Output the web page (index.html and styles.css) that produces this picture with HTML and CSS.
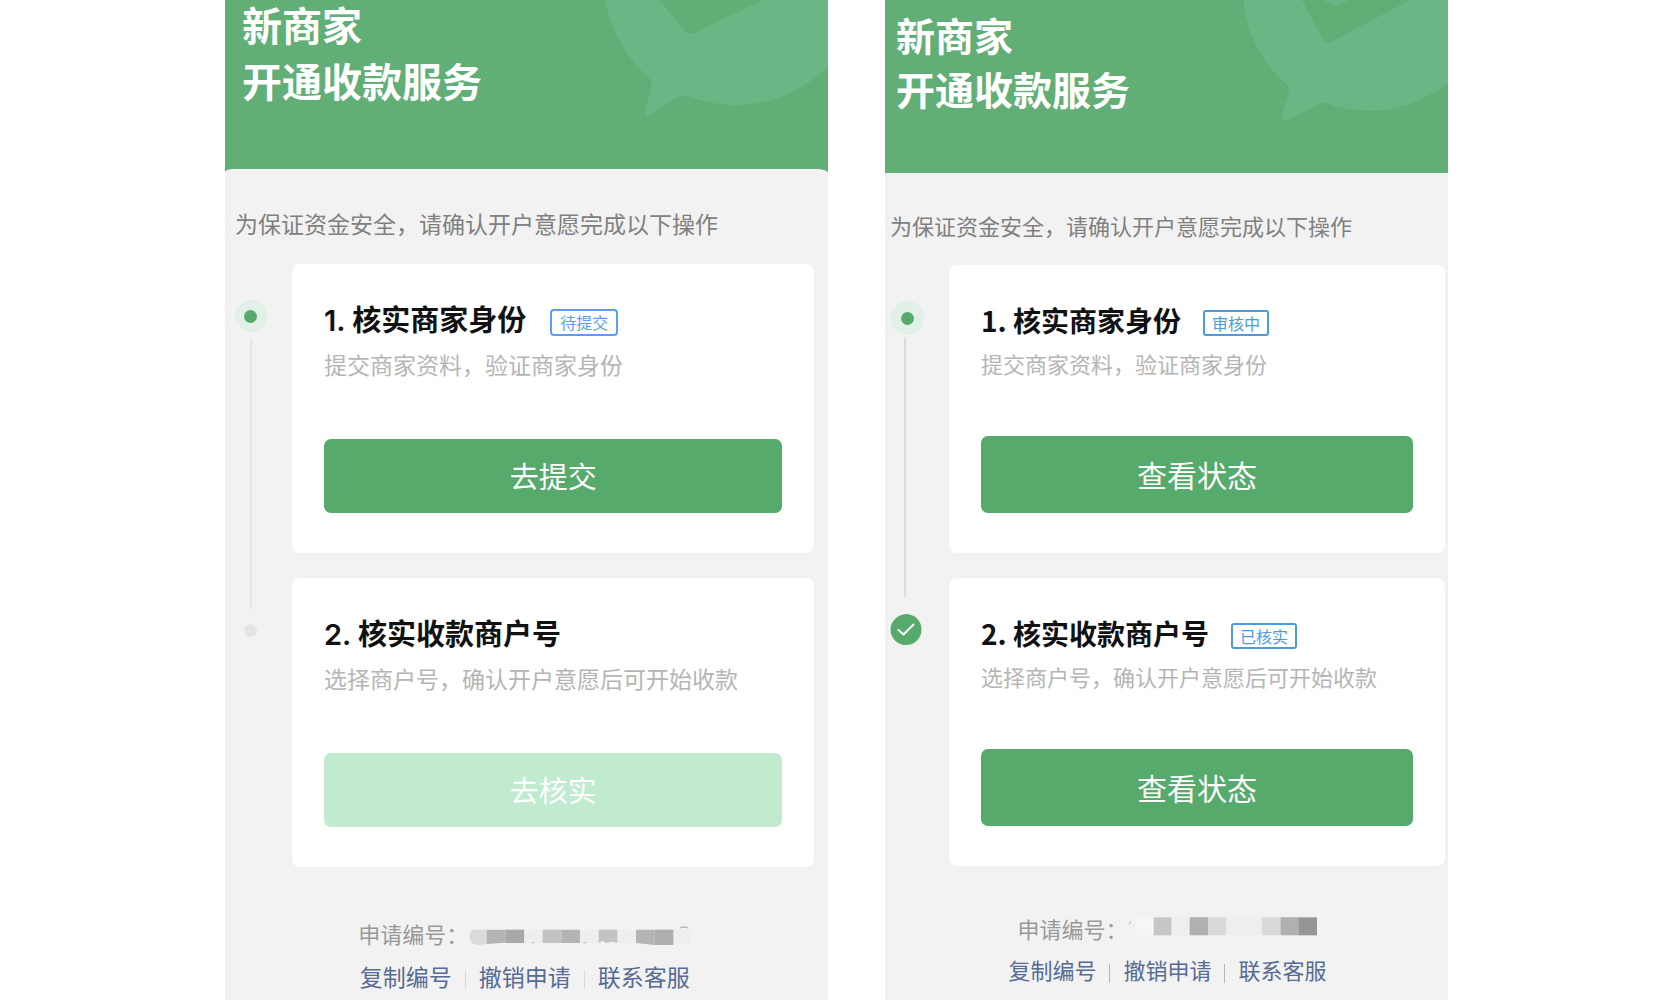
FILE: index.html
```html
<!DOCTYPE html>
<html lang="zh-CN">

<head>
    <meta charset="UTF-8">
    <meta name="viewport" content="width=device-width, initial-scale=1.0">
    <title>新商家开通收款服务</title>
    <link rel="stylesheet" href="styles.css">
</head>

<body>
    <main class="screens">
        <section class="screen screen-pending">
            <header class="banner">
                <svg class="banner-logo" width="226" height="118" viewBox="602 0 226 118" aria-hidden="true">
                    <path fill="#6cb685" fill-rule="evenodd" d="M604 -29A131 131 0 0 1 866 -29A131 131 0 0 1 690 97Q682 95 676 98L650 115Q645 117 645 111L652 84Q652 81 649 78A131 131 0 0 1 604 -29ZM659 0L685 31Q688 36 694 33L763 0Z"/>
                </svg>
                <h1>新商家<br>开通收款服务</h1>
            </header>
            <div class="sheet">
                <p class="notice">为保证资金安全，请确认开户意愿完成以下操作</p>
                <ol class="steps">
                    <li class="step">
                        <div class="rail">
                            <span class="node node-active"></span>
                            <span class="line"></span>
                        </div>
                        <div class="card">
                            <div class="card-title">
                                <h2>1. 核实商家身份</h2>
                                <span class="tag">待提交</span>
                            </div>
                            <p>提交商家资料，验证商家身份</p>
                            <button type="button">去提交</button>
                        </div>
                    </li>
                    <li class="step">
                        <div class="rail">
                            <span class="node node-idle"></span>
                        </div>
                        <div class="card">
                            <div class="card-title">
                                <h2>2. 核实收款商户号</h2>
                            </div>
                            <p>选择商户号，确认开户意愿后可开始收款</p>
                            <button type="button" disabled>去核实</button>
                        </div>
                    </li>
                </ol>
                <footer>
                    <div class="number">
                        <span>申请编号：</span>
                        <svg width="223" height="24" viewBox="386 62 669 72" aria-hidden="true">
                            <path fill="#dadada" d="M398 88H442V128Q432 134 418 134Q400 134 394 122Q386 100 398 88Z"/>
                            <path fill="#b5b5b5" d="M442 88H498V127L442 131Z"/>
                            <path fill="#a8a8a8" d="M498 88H555V128H498Z"/>
                            <path fill="#eeeeee" d="M555 88H610V128H555ZM722 88H778V128H722ZM834 88H890V128H834ZM1002 88H1055V128H1002Z"/>
                            <path fill="#c3c3c3" d="M610 88H666V128H610ZM778 88H834V128L818 124L800 128L790 122L778 128Z"/>
                            <path fill="#b4b4b4" d="M666 88H722V128H666ZM890 88H945V134L890 128Z"/>
                            <path fill="#aeaeae" d="M945 88H1002V134H945Z"/>
                            <path fill="#c0c0c0" d="M577 125h8v4h-8ZM732 125h8v4h-8Z"/>
                            <path fill="none" stroke="#b8b8b8" stroke-width="4" d="M1022 83Q1034 77 1046 83"/>
                        </svg>
                    </div>
                    <nav class="links">
                        <a href="#">复制编号</a>
                        <a href="#">撤销申请</a>
                        <a href="#">联系客服</a>
                    </nav>
                </footer>
            </div>
        </section>

        <section class="screen screen-review">
            <header class="banner">
                <svg class="banner-logo" width="206" height="124" viewBox="1242 0 206 124" aria-hidden="true">
                    <path fill="#6cb685" fill-rule="evenodd" d="M1243 -16A126 126 0 0 1 1495 -16A126 126 0 0 1 1326 103Q1321 102 1317 105L1287 120Q1282 122 1282 116L1289 91Q1290 88 1286 84A126 126 0 0 1 1243 -16ZM1302 0L1322 38Q1325 45 1331 42L1410 0H1348Q1336 10 1324 0Z"/>
                </svg>
                <h1>新商家<br>开通收款服务</h1>
            </header>
            <div class="sheet">
                <p class="notice">为保证资金安全，请确认开户意愿完成以下操作</p>
                <ol class="steps">
                    <li class="step">
                        <div class="rail">
                            <span class="node node-active"></span>
                            <span class="line"></span>
                        </div>
                        <div class="card">
                            <div class="card-title">
                                <h2>1. 核实商家身份</h2>
                                <span class="tag">审核中</span>
                            </div>
                            <p>提交商家资料，验证商家身份</p>
                            <button type="button">查看状态</button>
                        </div>
                    </li>
                    <li class="step">
                        <div class="rail">
                            <svg class="node" viewBox="1 2 34 34" aria-hidden="true">
                                <circle cx="17" cy="17.5" r="15.5" fill="#55aa6c"/>
                                <path d="M9.5 18L14.500 22.500L24.500 12.500" fill="none" stroke="#fff" stroke-width="2" stroke-linecap="round" stroke-linejoin="round"/>
                            </svg>
                        </div>
                        <div class="card">
                            <div class="card-title">
                                <h2>2. 核实收款商户号</h2>
                                <span class="tag">已核实</span>
                            </div>
                            <p>选择商户号，确认开户意愿后可开始收款</p>
                            <button type="button">查看状态</button>
                        </div>
                    </li>
                </ol>
                <footer>
                    <div class="number">
                        <span>申请编号：</span>
                        <svg width="190" height="24" viewBox="375 50 570 72" aria-hidden="true">
                            <path fill="none" stroke="#aaa" stroke-width="3" d="M380 74L388 67"/>
                            <path fill="#f6f6f6" d="M400 54H455V108H400Z"/>
                            <path fill="#c6c6c6" d="M455 54H509V108H455Z"/>
                            <path fill="#eeeeee" d="M509 54H563V108H509ZM672 54H780V108H672Z"/>
                            <path fill="#b0b0b0" d="M563 54H618V108H563ZM835 54H889V108H835Z"/>
                            <path fill="#dadada" d="M618 54H672V108H618ZM780 54H835V108H780Z"/>
                            <path fill="#959595" d="M889 54H945V108H889Z"/>
                        </svg>
                    </div>
                    <nav class="links">
                        <a href="#">复制编号</a>
                        <a href="#">撤销申请</a>
                        <a href="#">联系客服</a>
                    </nav>
                </footer>
            </div>
        </section>
    </main>
</body>

</html>
```
FILE: styles.css
```css
* {
    box-sizing: border-box;
}

body,
h1,
h2,
p,
ol {
    margin: 0;
    padding: 0;
}

body {
    background: #fff;
    font-family: "Noto Sans CJK SC", sans-serif;
}

.screens {
    display: flex;
    min-height: 100vh;
    padding-left: 13.4%;
}

.screen {
    display: flex;
    flex-direction: column;
    background: #61af77;
}

.screen-pending {
    width: 41.5%;
    margin-right: 3.9%;
}

.screen-review {
    width: 38.7%;
}

/* banner */
.banner {
    position: relative;
    display: flex;
    align-items: flex-end;
    height: 169px;
    padding: 0 17px 61px;
}

.banner-logo {
    position: absolute;
    top: 0;
    right: 0;
}

h1 {
    position: relative;
    color: #fff;
    font-size: 40px;
    font-weight: 700;
    line-height: 56px;
}

.screen-review .banner {
    height: 173px;
    padding: 0 11px 58px;
}

.screen-review h1 {
    font-size: 39px;
    line-height: 54px;
}

/* content */
.sheet {
    flex: 1;
    padding: 38px 14px 0 10px;
    border-radius: 8px 12px 0 0 / 3px 4px 0 0;
    background: #f2f2f2;
    font-size: 23px;
    line-height: 32px;
}

.screen-review .sheet {
    padding: 36px 3px 0 5px;
    border-radius: 0;
    font-size: 22px;
}

.notice {
    margin-bottom: 25px;
    color: #808080;
}

.screen-review .notice {
    margin-bottom: 24px;
}

.steps {
    list-style: none;
}

.step {
    display: flex;
    gap: 25px;
}

.step + .step {
    margin-top: 25px;
}

.rail {
    display: flex;
    flex-direction: column;
    align-items: center;
    width: 34px;
    padding-top: 36px;
}

.screen-pending .rail {
    width: 32px;
}

.node {
    display: flex;
    flex: none;
    align-items: center;
    justify-content: center;
    width: 100%;
    height: 34px;
    border-radius: 50%;
}

.node-active {
    background: #e1f1e7;
}

.node-active::before,
.node-idle::before {
    content: "";
    width: 13px;
    height: 13px;
    border-radius: 50%;
    background: #55aa6c;
}

.node-idle::before {
    background: #e4e4e4;
}

.screen-pending .node {
    height: 32px;
}

/* runs past the card, down to the next node */
.line {
    flex: 1;
    width: 2px;
    margin: 6px 0 -56px;
    background: #e5e5e5;
}

.screen-review .line {
    margin: 2px 5px -44px 0;
    background: #dcdcdc;
}

.card {
    flex: 1;
    padding: 37px 32px 40px;
    border-radius: 8px;
    background: #fff;
}

.screen-review .card {
    padding-top: 35px;
}

.card-title {
    display: flex;
    align-items: center;
    gap: 24px;
    height: 40px;
}

h2 {
    color: #111;
    font-family: Inter, "Noto Sans CJK SC", sans-serif;
    font-size: 29px;
    font-weight: 600;
    line-height: 40px;
}

.screen-review h2 {
    font-family: "Noto Sans CJK SC", sans-serif;
    font-size: 28px;
    font-weight: 700;
}

.screen-review .card-title {
    gap: 22px;
}

.tag {
    margin-top: 3px;
    padding: 0 8px;
    border: 2px solid #5b9df5;
    border-radius: 4px;
    color: #5b9df5;
    font-size: 16px;
    line-height: 23px;
}

.screen-review .tag {
    margin-top: 6px;
    padding: 0 7px;
    border-color: #4c9bdc;
    border-radius: 3px;
    color: #4c9bdc;
    line-height: 22px;
}

.card p {
    margin: 7px 0 59px;
    color: #b5b5b5;
}

.screen-review .card p {
    margin-bottom: 57px;
}

button {
    display: block;
    width: 100%;
    height: 74px;
    padding: 0 0 2px;
    border: 0;
    border-radius: 7px;
    background: #55aa6c;
    color: #fff;
    font-family: inherit;
    font-size: 29px;
}

button:disabled {
    background: #c0ebcf;
    color: #fff;
}

.screen-review button {
    height: 77px;
    font-size: 30px;
}

/* footer */
footer {
    display: flex;
    flex-direction: column;
    align-items: center;
    gap: 11px;
    padding: 50px 0 7px;
}

.screen-review footer {
    gap: 9px;
    padding-top: 46px;
}

.number {
    display: flex;
    align-items: center;
    color: #999;
    font-size: 22px;
}

.links {
    display: flex;
    align-items: center;
}

.links a {
    color: #576b95;
    text-decoration: none;
}

.links a + a::before {
    content: "";
    display: inline-block;
    width: 1px;
    height: 19px;
    margin: 0 13px;
    background: #d8d8d8;
    vertical-align: middle;
}

.screen-review .links a + a::before {
    background: #b5b5b5;
}
```
